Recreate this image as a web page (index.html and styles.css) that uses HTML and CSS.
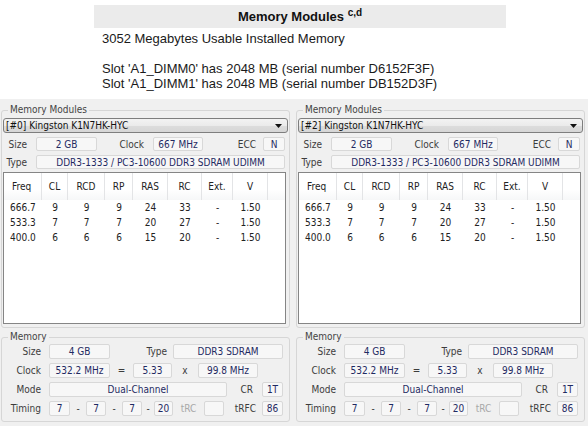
FILE: index.html
```html
<!DOCTYPE html>
<html>
<head>
<meta charset="utf-8">
<title>Memory Modules</title>
<link rel="stylesheet" href="styles.css">
</head>
<body>
<div class="top">
  <div class="titlebar">Memory Modules <span class="sup">c,d</span></div>
  <div class="info">3052 Megabytes Usable Installed Memory<br><br>Slot 'A1_DIMM0' has 2048 MB (serial number D6152F3F)<br>Slot 'A1_DIMM1' has 2048 MB (serial number DB152D3F)</div>
</div>
<div class="shot">
  <div class="col">
    <fieldset class="grp grp-mod">
      <legend>Memory Modules</legend>
      <div class="combo"><span>[#0] Kingston K1N7HK-HYC</span><svg class="arrow" width="7" height="4" viewBox="0 0 7 4"><path d="M0 0H7L3.5 4Z" fill="#111"/></svg></div>
      <div class="row">
        <span class="lbl m-lbl">Size</span><span class="box m-size">2 GB</span>
        <span class="lbl m-clk-l">Clock</span><span class="box m-clk">667 MHz</span>
        <span class="lbl m-ecc-l">ECC</span><span class="box m-ecc">N</span>
      </div>
      <div class="row">
        <span class="lbl m-lbl">Type</span><span class="box m-type">DDR3-1333 / PC3-10600 DDR3 SDRAM UDIMM</span>
      </div>
      <div class="list">
        <div class="thead">
          <span class="th first">Freq</span><span class="th">CL</span><span class="th">RCD</span><span class="th">RP</span><span class="th">RAS</span><span class="th">RC</span><span class="th">Ext.</span><span class="th">V</span><span class="th fill"></span>
        </div>
        <div class="tr"><span class="td first">666.7</span><span class="td">9</span><span class="td">9</span><span class="td">9</span><span class="td">24</span><span class="td">33</span><span class="td">-</span><span class="td">1.50</span></div>
        <div class="tr"><span class="td first">533.3</span><span class="td">7</span><span class="td">7</span><span class="td">7</span><span class="td">20</span><span class="td">27</span><span class="td">-</span><span class="td">1.50</span></div>
        <div class="tr"><span class="td first">400.0</span><span class="td">6</span><span class="td">6</span><span class="td">6</span><span class="td">15</span><span class="td">20</span><span class="td">-</span><span class="td">1.50</span></div>
      </div>
    </fieldset>
    <fieldset class="grp grp-mem">
      <legend>Memory</legend>
      <div class="row row2">
        <span class="lbl g-lbl">Size</span><span class="box g-size">4 GB</span>
        <span class="lbl g-type-l">Type</span><span class="box g-type">DDR3 SDRAM</span>
      </div>
      <div class="row row2">
        <span class="lbl g-lbl">Clock</span><span class="box g-size">532.2 MHz</span>
        <span class="sym g-eq">=</span><span class="box g-mult">5.33</span>
        <span class="sym g-x">x</span><span class="box g-bus">99.8 MHz</span>
      </div>
      <div class="row row2">
        <span class="lbl g-lbl">Mode</span><span class="box g-mode">Dual-Channel</span>
        <span class="lbl g-cr-l">CR</span><span class="box g-cr">1T</span>
      </div>
      <div class="row row2">
        <span class="lbl g-lbl">Timing</span><span class="box t1">7</span><span class="sym d1">-</span><span class="box t2">7</span><span class="sym d1">-</span><span class="box t2">7</span><span class="sym d2">-</span><span class="box t4">20</span><span class="sym trc">tRC</span><span class="box t2"></span><span class="lbl trfc">tRFC</span><span class="box g-cr">86</span>
      </div>
    </fieldset>
  </div>
  <div class="col">
    <fieldset class="grp grp-mod">
      <legend>Memory Modules</legend>
      <div class="combo"><span>[#2] Kingston K1N7HK-HYC</span><svg class="arrow" width="7" height="4" viewBox="0 0 7 4"><path d="M0 0H7L3.5 4Z" fill="#111"/></svg></div>
      <div class="row">
        <span class="lbl m-lbl">Size</span><span class="box m-size">2 GB</span>
        <span class="lbl m-clk-l">Clock</span><span class="box m-clk">667 MHz</span>
        <span class="lbl m-ecc-l">ECC</span><span class="box m-ecc">N</span>
      </div>
      <div class="row">
        <span class="lbl m-lbl">Type</span><span class="box m-type">DDR3-1333 / PC3-10600 DDR3 SDRAM UDIMM</span>
      </div>
      <div class="list">
        <div class="thead">
          <span class="th first">Freq</span><span class="th">CL</span><span class="th">RCD</span><span class="th">RP</span><span class="th">RAS</span><span class="th">RC</span><span class="th">Ext.</span><span class="th">V</span><span class="th fill"></span>
        </div>
        <div class="tr"><span class="td first">666.7</span><span class="td">9</span><span class="td">9</span><span class="td">9</span><span class="td">24</span><span class="td">33</span><span class="td">-</span><span class="td">1.50</span></div>
        <div class="tr"><span class="td first">533.3</span><span class="td">7</span><span class="td">7</span><span class="td">7</span><span class="td">20</span><span class="td">27</span><span class="td">-</span><span class="td">1.50</span></div>
        <div class="tr"><span class="td first">400.0</span><span class="td">6</span><span class="td">6</span><span class="td">6</span><span class="td">15</span><span class="td">20</span><span class="td">-</span><span class="td">1.50</span></div>
      </div>
    </fieldset>
    <fieldset class="grp grp-mem">
      <legend>Memory</legend>
      <div class="row row2">
        <span class="lbl g-lbl">Size</span><span class="box g-size">4 GB</span>
        <span class="lbl g-type-l">Type</span><span class="box g-type">DDR3 SDRAM</span>
      </div>
      <div class="row row2">
        <span class="lbl g-lbl">Clock</span><span class="box g-size">532.2 MHz</span>
        <span class="sym g-eq">=</span><span class="box g-mult">5.33</span>
        <span class="sym g-x">x</span><span class="box g-bus">99.8 MHz</span>
      </div>
      <div class="row row2">
        <span class="lbl g-lbl">Mode</span><span class="box g-mode">Dual-Channel</span>
        <span class="lbl g-cr-l">CR</span><span class="box g-cr">1T</span>
      </div>
      <div class="row row2">
        <span class="lbl g-lbl">Timing</span><span class="box t1">7</span><span class="sym d1">-</span><span class="box t2">7</span><span class="sym d1">-</span><span class="box t2">7</span><span class="sym d2">-</span><span class="box t4">20</span><span class="sym trc">tRC</span><span class="box t2"></span><span class="lbl trfc">tRFC</span><span class="box g-cr">86</span>
      </div>
    </fieldset>
  </div>
</div>
</body>
</html>
```
FILE: styles.css
```css
* { box-sizing: border-box; }
html, body { margin: 0; padding: 0; background: #fff; }
body {
  width: 588px; height: 426px; overflow: hidden;
  font-family: "Liberation Sans", Arial, sans-serif; color: #111;
}
.top { height: 99px; padding: 5px 0 0 94px; }
.titlebar {
  width: 412px; height: 23px; background: #ebebeb;
  font-weight: bold; font-size: 13px; line-height: 23px; text-align: center; color: #111;
}
.sup { font-size: 10px; vertical-align: 5px; line-height: 0; }
.info { margin-top: 3px; padding-left: 8px; font-size: 13px; line-height: 15px; color: #1a1a1a; }

.shot {
  height: 327px; background: #f0f0f0;
  display: flex; gap: 6px; padding: 5px 0 0 1px;
  font-family: "DejaVu Sans Condensed", "DejaVu Sans", sans-serif; font-size: 10px;
}
.col { width: 289px; display: flex; flex-direction: column; gap: 3px; }
.grp {
  margin: 0; min-width: 0; border: 1px solid #d6d6d6; border-radius: 3px;
  padding: 0 1px 3px;
}
.grp legend { margin-left: 5px; padding: 0 2px; line-height: 12px; font-size: 10px; color: #444; }
.grp-mem { padding-bottom: 5px; }

.combo {
  margin-top: 2px; height: 15px; border: 1px solid #7e7e7e; border-radius: 3px;
  background: linear-gradient(#f3f3f3, #ebebeb 50%, #dddddd 51%, #d6d6d6);
  display: flex; align-items: center; padding-left: 2px; color: #111;
}
.arrow { margin-left: auto; margin-right: 5px; }

.row { display: flex; height: 14px; margin-top: 4px; }
.row2 { height: 15px; }
.grp-mem .row2:first-of-type { margin-top: 1px; }
.lbl { display: flex; align-items: center; justify-content: flex-end; color: #3c3c3c; flex: none; }
.sym { display: flex; align-items: center; justify-content: center; color: #3c3c3c; flex: none; }
.box {
  flex: none; border: 1px solid #d8d8d8; border-radius: 2px; background: #f7f7f7;
  display: flex; align-items: center; justify-content: center; color: #1f2a62;
}

.m-lbl { width: 33px; padding-right: 9px; }
.m-size { width: 61px; }
.m-clk-l { width: 56px; padding-right: 9px; }
.m-clk { width: 50px; }
.m-ecc-l { width: 60px; padding-right: 7px; }
.m-ecc { width: 22px; }
.m-type { width: 249px; }

.g-lbl { width: 46px; padding-right: 8px; }
.g-size { width: 61px; }
.g-type-l { width: 63px; padding-right: 6px; }
.g-type { width: 110px; }
.g-eq { width: 23px; }
.g-mult { width: 39px; }
.g-x { width: 26px; }
.g-bus { width: 60px; }
.g-mode { width: 178px; }
.g-cr-l { width: 35px; padding-right: 9px; }
.g-cr { width: 21px; }
.t1 { width: 21px; }
.t2 { width: 20px; }
.t4 { width: 19px; }
.d1 { width: 16px; }
.d2 { width: 12px; }
.trc { width: 31px; color: #a8a8a8; }
.trfc { width: 38px; padding-right: 6px; }

.list {
  margin-top: 3px; height: 152px; width: 283px;
  border: 1px solid #858585; background: #fff; color: #222;
}
.thead, .tr {
  display: grid;
  grid-template-columns: 38px 26px 37px 28px 35px 34px 31px 35px 1fr;
}
.thead { height: 27px; background: linear-gradient(#fff, #fff 60%, #f6f7f8); }
.th {
  display: flex; align-items: center; justify-content: center;
  border-right: 1px solid #e3e4e6; color: #222;
}
.th.first { justify-content: flex-start; padding-left: 8px; }
.th.fill { border-right: none; }
.tr { height: 15px; }
.td { display: flex; align-items: center; justify-content: center; }
.td.first { justify-content: flex-start; padding-left: 6px; }
```
